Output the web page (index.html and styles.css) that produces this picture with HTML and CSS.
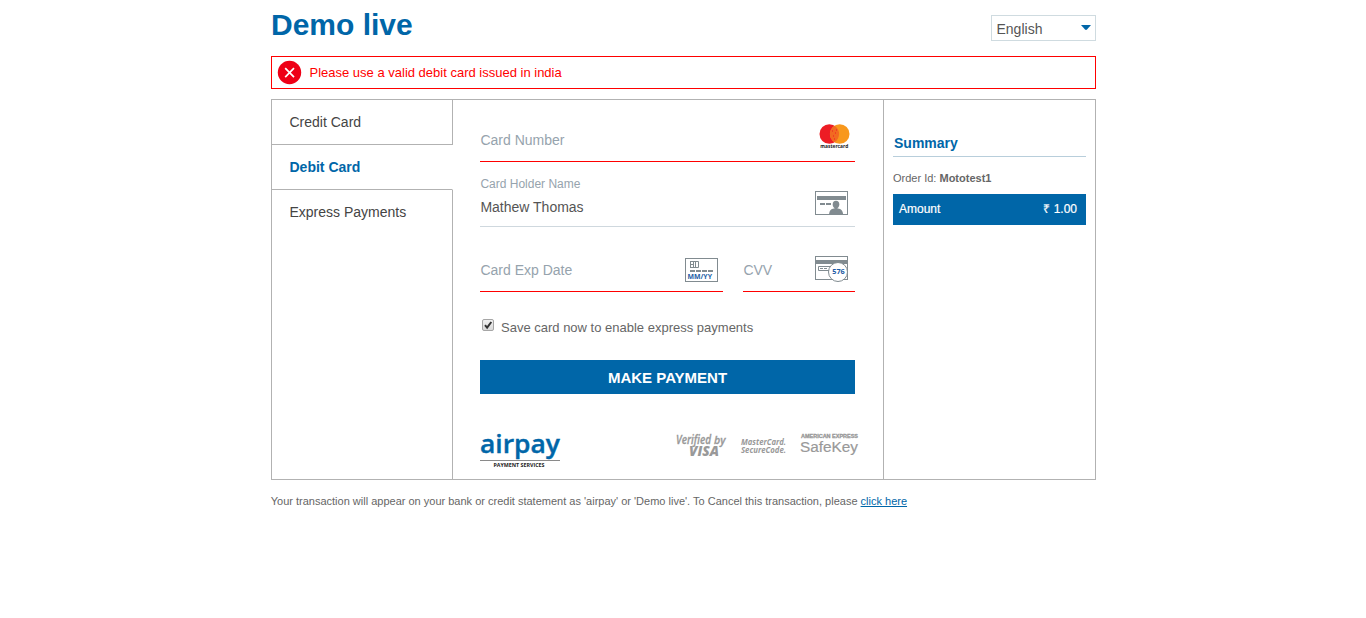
FILE: index.html
```
<!DOCTYPE html>
<html lang="en">
<head>
<meta charset="utf-8">
<title>Demo live</title>
<link rel="stylesheet" href="styles.css">
</head>
<body>
<div class="page">
  <header class="header">
    <h1 class="title">Demo live</h1>
    <div class="language"><span>English</span>
      <svg width="10" height="5" viewBox="0 0 10 5"><path d="M0 0H10L6 4.6Q5 5.2 4 4.6Z" fill="#0066a8"/></svg>
    </div>
  </header>

  <div class="alert">
    <svg width="24" height="24" viewBox="0 0 24 24"><circle cx="11.500" cy="11.500" r="11.700" fill="#ee0016"/><path d="M7.200 7.200l8.800 9M16 7.200l-8.800 9" stroke="#fff" stroke-width="1.700"/></svg>
    <span>Please use a valid debit card issued in india</span>
  </div>

  <main class="panel">
    <nav class="tabs">
      <a class="tab">Credit Card</a>
      <a class="tab tab-active">Debit Card</a>
      <a class="tab tab-last">Express Payments</a>
    </nav>

    <section class="form">
      <div class="field field-number">
        <span class="label">Card Number</span>
        <svg class="icon-mastercard" width="34" height="28" viewBox="0 0 34 28">
          <circle cx="10.300" cy="11" r="9.800" fill="#ed1c24"/><circle cx="20.700" cy="11" r="9.800" fill="#f8981d"/>
          <path d="M15.500 2.700a9.800 9.800 0 0 1 0 16.600a9.800 9.800 0 0 1 0-16.600z" fill="#f26a21"/>
          <path d="M13 8h1M16 10h1M14 13h1M17 7h1M15 16h1" stroke="#ed1c24"/>
          <text x="1.300" y="25" class="mc-text" textLength="28" lengthAdjust="spacingAndGlyphs">mastercard</text>
        </svg>
      </div>

      <div class="field field-name">
        <div class="stack"><span class="small-label">Card Holder Name</span><span class="value">Mathew Thomas</span></div>
        <svg class="icon-holder" width="33" height="24" viewBox="0 0 33 24">
          <rect x=".5" y=".5" width="32" height="23" fill="#fff" stroke="#818b90"/>
          <path d="M2 5h29v4H2zM5 12h5v2H5zM11 12h5v2h-5z" fill="#818b90"/>
          <ellipse cx="21" cy="13.500" rx="3.300" ry="3.700" fill="#818b90"/>
          <path d="M14 24c.2-4.500 2-6 5-6.500h4c3 .5 4.900 2 5.200 6.500z" fill="#818b90"/>
          <path d="M19.500 16h3v2h-3z" fill="#818b90"/>
        </svg>
      </div>

      <div class="pair">
        <div class="field field-exp">
          <span class="label">Card Exp Date</span>
          <svg class="icon-exp" width="33" height="24" viewBox="0 0 33 24">
            <rect x=".5" y=".5" width="32" height="23" fill="#fff" stroke="#818b90"/>
            <path d="M5.500 3.500h8v6h-8M5.500 3v7M8.500 3.500v6M10.500 3.500v6M5.500 6.500h3" fill="none" stroke="#818b90"/>
            <path d="M5 13h23" stroke="#818b90" stroke-width="2" stroke-dasharray="5 1"/>
            <text x="2.500" y="21.300" class="exp-text" textLength="24.500" lengthAdjust="spacingAndGlyphs">MM/YY</text>
          </svg>
        </div>
        <div class="field field-cvv">
          <span class="label">CVV</span>
          <svg class="icon-cvv" width="34" height="27" viewBox="0 0 34 27">
            <rect x=".5" y=".5" width="32" height="23" fill="#fff" stroke="#818b90"/>
            <path d="M0 4h33v4H0z" fill="#818b90"/>
            <path d="M15 10.500H3.500v4H14M5 12.500h3M9 12.500h3" fill="none" stroke="#818b90"/>
            <circle cx="23" cy="16" r="9.500" fill="#fff" stroke="#818b90"/>
            <text x="17.300" y="18.300" class="cvv-text" textLength="12.500" lengthAdjust="spacingAndGlyphs">576</text>
          </svg>
        </div>
      </div>

      <div class="save">
        <svg width="12" height="12" viewBox="0 0 12 12">
          <defs><linearGradient id="box" x2="0" y2="1"><stop stop-color="#f2f2f2"/><stop offset="1" stop-color="#d8d8d8"/></linearGradient></defs>
          <rect x=".5" y=".5" width="11" height="11" rx="1.500" fill="url(#box)" stroke="#a6a6a6"/>
          <path d="M3 6.200l2.100 2.400L9.300 3" fill="none" stroke="#333" stroke-width="2"/>
        </svg>
        <span>Save card now to enable express payments</span>
      </div>

      <button class="pay">MAKE PAYMENT</button>

      <div class="logos">
        <svg class="logo-airpay" width="82" height="38" viewBox="0 0 82 38">
          <text x="0" y="21.500" class="airpay" textLength="80" lengthAdjust="spacingAndGlyphs">airpay</text>
          <path d="M0 29.500h80" stroke="#8a8a8a"/>
          <text x="13.500" y="35.700" class="airpay-sub" textLength="51" lengthAdjust="spacingAndGlyphs">PAYMENT SERVICES</text>
        </svg>
        <svg class="logo-visa" width="51" height="28" viewBox="0 0 51 28">
          <text x="0" y="13" class="verified" textLength="35" lengthAdjust="spacingAndGlyphs">Verified</text>
          <text x="38" y="13" class="by" textLength="11.500" lengthAdjust="spacingAndGlyphs">by</text>
          <text x="13" y="24.800" class="visa" textLength="30" lengthAdjust="spacingAndGlyphs">VISA</text>
        </svg>
        <svg class="logo-secure" width="47" height="28" viewBox="0 0 47 28">
          <text x="0" y="13.700" class="secure" textLength="45" lengthAdjust="spacingAndGlyphs">MasterCard.</text>
          <text x="0" y="22.300" class="secure" textLength="45" lengthAdjust="spacingAndGlyphs">SecureCode.</text>
        </svg>
        <svg class="logo-safekey" width="60" height="28" viewBox="0 0 60 28">
          <text x="1" y="7" class="amex" textLength="57" lengthAdjust="spacingAndGlyphs">AMERICAN EXPRESS</text>
          <text x="0" y="20.500" class="safekey" textLength="58" lengthAdjust="spacingAndGlyphs">SafeKey</text>
        </svg>
      </div>
    </section>

    <aside class="summary">
      <h2 class="summary-title">Summary</h2>
      <div class="order">Order Id: <b>Mototest1</b></div>
      <div class="amount"><span>Amount</span><span>₹ 1.00</span></div>
    </aside>
  </main>

  <p class="note">Your transaction will appear on your bank or credit statement as 'airpay' or 'Demo live'. To Cancel this transaction, please <a class="cancel">click here</a></p>
</div>
</body>
</html>
```
FILE: styles.css
```
* { box-sizing: border-box; }
body { margin: 0; background: #fff; color: #555; font-family: "Liberation Sans", Arial, sans-serif; font-size: 14px; }
svg { display: block; flex: none; overflow: visible; }
.page { width: 825px; margin-left: 271px; }
.header { height: 56px; display: flex; justify-content: space-between; align-items: flex-start; }
.title { margin: 7px 0 0; font-size: 30px; line-height: 35px; color: #0066a8; }
.language { width: 105px; height: 26px; margin-top: 15px; padding: 0 4px 0 4.5px; border: 1px solid #cfdbe0; display: flex; justify-content: space-between; align-items: center; line-height: 26px; }
.language span { padding-top: 2px; }
.language svg { margin-bottom: 2px; }
.alert { height: 33px; border: 1px solid #f00; display: flex; align-items: center; gap: 7.5px; padding-left: 6px; color: #f00; font-size: 13px; }
.panel { height: 381px; margin-top: 10px; border: 1px solid #b2b2b2; display: grid; grid-template-columns: 181px 431px 1fr; }
.tabs { display: flex; flex-direction: column; }
.tab { height: 45px; padding-left: 17.5px; line-height: 44px; border-right: 1px solid #b2b2b2; border-bottom: 1px solid #b2b2b2; color: #444; }
.tab-active { color: #0066a8; font-weight: bold; border-right-color: transparent; }
.tab-last { flex: 1; border-bottom: 0; }
.form { padding: 18px 28px 0 27px; border-right: 1px solid #b2b2b2; }
.field { display: flex; justify-content: space-between; border-bottom: 1px solid #f00; }
.label { padding-left: .4px; color: #96a3ad; line-height: 16px; }
.field-number { height: 44px; padding-top: 14px; }
.icon-mastercard { margin: -9px 2px 0 0; }
.field-name { height: 65px; border-color: #cfd8de; }
.stack { display: flex; flex-direction: column; padding: 15px 0 0 .4px; }
.small-label { font-size: 12px; line-height: 14px; color: #96a3ad; }
.value { margin-top: 8px; line-height: 16px; }
.icon-holder { margin: 29px 7px 0 0; }
.pair { display: flex; gap: 20px; }
.field-exp, .field-cvv { height: 65px; padding-top: 35px; }
.field-exp { width: 243px; }
.field-cvv { flex: 1; }
.icon-exp { margin: -4px 5px 0 0; }
.icon-cvv { margin: -6px 6px 0 0; }
.save { display: flex; gap: 7px; margin: 27px 0 0 2px; height: 41px; font-size: 13px; line-height: 17px; color: #666; }
.pay { display: block; width: 375px; height: 34px; padding: 0; border: 0; background: #0066a8; color: #fff; font: bold 15px "Liberation Sans", Arial, sans-serif; }
.logos { display: flex; margin: 37px -5px 0 0; fill: #999; }
.logo-visa { margin-left: 114px; }
.logo-secure { margin-left: 14px; }
.logo-safekey { margin-left: 12px; }
.summary { padding: 34px 9px 0; }
.summary-title { margin: 0; height: 23px; padding-left: 1px; border-bottom: 1px solid #b8cedb; font-size: 14px; line-height: 18px; color: #0066a8; }
.order { margin-top: 15px; height: 22px; font-size: 11px; line-height: 13px; color: #666; }
.amount { height: 31px; padding: 0 9px 2px 6px; background: #0066a8; color: #fff; display: flex; justify-content: space-between; align-items: center; font-size: 12px; -webkit-text-stroke: .2px #fff; }
.note { margin: 15px 0 0 -.3px; font-size: 11px; line-height: 13px; color: #666; white-space: nowrap; }
.cancel { color: #0066a8; text-decoration: underline; }
.mc-text { font: bold 5.5px "Open Sans", sans-serif; fill: #222; }
.exp-text, .cvv-text { font: bold 7px "Open Sans", sans-serif; fill: #1d5da5; }
.exp-text { font-size: 7.5px; }
.airpay { font: 600 26px "Open Sans", sans-serif; fill: #0066a8; stroke: #0066a8; stroke-width: .4; }
.airpay-sub { font: bold 5.5px "Open Sans", sans-serif; fill: #222; }
.verified, .by { font: italic 600 12px "Open Sans", sans-serif; stroke: #999; stroke-width: .3; }
.by { font-size: 10.5px; }
.visa { font: italic 800 14px "Open Sans", sans-serif; }
.secure { font: italic bold 9.5px "Open Sans", sans-serif; }
.amex { font: bold 5px "Liberation Sans", sans-serif; stroke: #999; stroke-width: .3; }
.safekey { font: 15.5px "Liberation Sans", sans-serif; stroke: #999; stroke-width: .2; }
```
